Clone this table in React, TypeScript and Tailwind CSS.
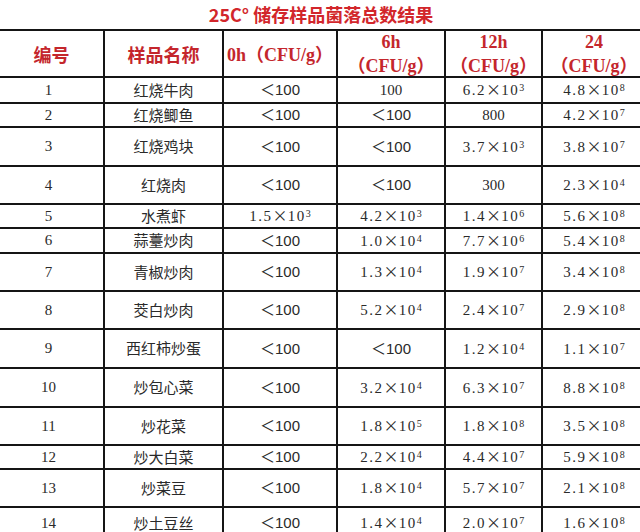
import type { ReactNode } from 'react';

const serif = "font-['Liberation_Serif','Noto_Sans_CJK_SC',serif]";
const cjk = "font-['Noto_Sans_CJK_SC',sans-serif]";

type Val = string | [string, string];

interface Row {
  no: string;
  name: string;
  values: [Val, Val, Val, Val];
}

const rows: Row[] = [
  { no: '1', name: '红烧牛肉', values: ['<', '100', ['6.2', '3'], ['4.8', '8']] },
  { no: '2', name: '红烧鲫鱼', values: ['<', '<', '800', ['4.2', '7']] },
  { no: '3', name: '红烧鸡块', values: ['<', '<', ['3.7', '3'], ['3.8', '7']] },
  { no: '4', name: '红烧肉', values: ['<', '<', '300', ['2.3', '4']] },
  { no: '5', name: '水煮虾', values: [['1.5', '3'], ['4.2', '3'], ['1.4', '6'], ['5.6', '8']] },
  { no: '6', name: '蒜薹炒肉', values: ['<', ['1.0', '4'], ['7.7', '6'], ['5.4', '8']] },
  { no: '7', name: '青椒炒肉', values: ['<', ['1.3', '4'], ['1.9', '7'], ['3.4', '8']] },
  { no: '8', name: '茭白炒肉', values: ['<', ['5.2', '4'], ['2.4', '7'], ['2.9', '8']] },
  { no: '9', name: '西红柿炒蛋', values: ['<', '<', ['1.2', '4'], ['1.1', '7']] },
  { no: '10', name: '炒包心菜', values: ['<', ['3.2', '4'], ['6.3', '7'], ['8.8', '8']] },
  { no: '11', name: '炒花菜', values: ['<', ['1.8', '5'], ['1.8', '8'], ['3.5', '8']] },
  { no: '12', name: '炒大白菜', values: ['<', ['2.2', '4'], ['4.4', '7'], ['5.9', '8']] },
  { no: '13', name: '炒菜豆', values: ['<', ['1.8', '4'], ['5.7', '7'], ['2.1', '8']] },
  { no: '14', name: '炒土豆丝', values: ['<', ['1.4', '4'], ['2.0', '7'], ['1.6', '8']] },
];

const cell = 'flex items-center justify-center border-r-2 border-b-2 border-[#151515] text-center';

function Value({ v }: { v: Val }) {
  if (v === '<') {
    return (
      <span className="text-[15px] text-[#2a2a2a]">
        <span className={cjk}>＜</span>
        <span className="font-['Liberation_Sans',sans-serif]">100</span>
      </span>
    );
  }
  if (typeof v === 'string') {
    return <span className={`${serif} text-[15px] text-[#2a2a2a]`}>{v}</span>;
  }
  return (
    <span className={`${serif} text-[15px] tracking-[1.5px] text-[#2a2a2a]`}>
      {v[0]}
      <span className={`${cjk} tracking-normal`}>×</span>
      10
      <sup className="relative -top-[4px] text-[10px] tracking-normal">{v[1]}</sup>
    </span>
  );
}

function Head({ children }: { children: ReactNode }) {
  return (
    <div className={`${cell} ${serif} flex-col text-[18px] leading-[22px] font-bold text-[#c4262c]`}>
      {children}
    </div>
  );
}

function Unit() {
  return (
    <span>
      <span className={cjk}>（</span>CFU/g<span className={cjk}>）</span>
    </span>
  );
}

export default function App() {
  return (
    <div className="h-[532px] w-[640px] overflow-hidden bg-white">
      <div className="flex h-[29px] items-center justify-center pl-[2px]">
        <h1 className={`${cjk} text-[18px] font-bold text-[#d2262b]`}>25C° 储存样品菌落总数结果</h1>
      </div>
      <div className="grid w-[647px] grid-cols-[105px_119px_114px_108px_97px_104px] grid-rows-[47px_26px_24px_39px_38px_24px_25px_38px_38px_39px_39px_38px_24px_38px_32px] border-t-2 border-[#151515]">
        <Head>
          <span className={cjk}>编号</span>
        </Head>
        <Head>
          <span className={cjk}>样品名称</span>
        </Head>
        <Head>
          <span className="whitespace-nowrap">
            0h<span className={cjk}>（</span>CFU/g<span className={cjk}>）</span>
          </span>
        </Head>
        <Head>
          <span>6h</span>
          <Unit />
        </Head>
        <Head>
          <span>12h</span>
          <Unit />
        </Head>
        <Head>
          <span>24</span>
          <Unit />
        </Head>
        {rows.map((r) => (
          <div key={r.no} className="contents">
            <div className={`${cell} ${serif} pr-[6px] text-[15px] text-[#2a2a2a]`}>{r.no}</div>
            <div className={`${cell} ${cjk} text-[15px] text-[#2a2a2a]`}>{r.name}</div>
            {r.values.map((v, i) => (
              <div key={i} className={cell}>
                <Value v={v} />
              </div>
            ))}
          </div>
        ))}
      </div>
    </div>
  );
}
